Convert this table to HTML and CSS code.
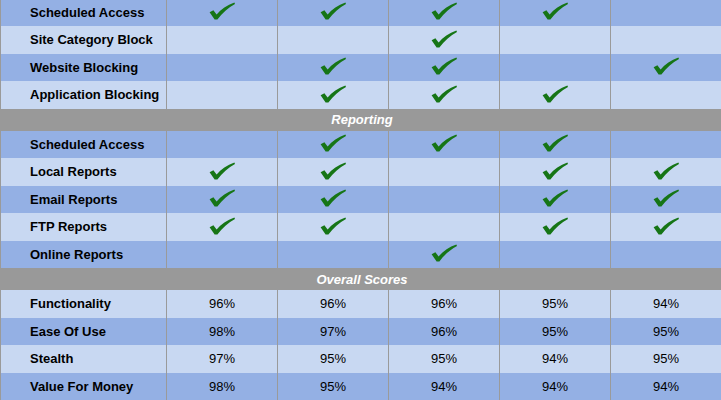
FILE: index.html
```html
<!DOCTYPE html>
<html>
<head>
<meta charset="utf-8">
<link rel="stylesheet" href="styles.css">
</head>
<body>
<svg class="defs" width="0" height="0" aria-hidden="true">
  <symbol id="chk" viewBox="0 0 26 18">
    <path d="M0.6,10.2 L4.4,8.2 L7.6,12.4 C12,7.4 18,2.8 25.4,0.4 L26,2 C19.4,5.6 13,11 8.4,17.6 L5.6,17.6 Z"/>
  </symbol>
</svg>
<div class="sheet">
  <div class="row dark"><div class="cell label">Scheduled Access</div><div class="cell"><svg class="ck"><use href="#chk"/></svg></div><div class="cell"><svg class="ck"><use href="#chk"/></svg></div><div class="cell"><svg class="ck"><use href="#chk"/></svg></div><div class="cell"><svg class="ck"><use href="#chk"/></svg></div><div class="cell"></div></div>
  <div class="row light"><div class="cell label">Site Category Block</div><div class="cell"></div><div class="cell"></div><div class="cell"><svg class="ck"><use href="#chk"/></svg></div><div class="cell"></div><div class="cell"></div></div>
  <div class="row dark"><div class="cell label">Website Blocking</div><div class="cell"></div><div class="cell"><svg class="ck"><use href="#chk"/></svg></div><div class="cell"><svg class="ck"><use href="#chk"/></svg></div><div class="cell"></div><div class="cell"><svg class="ck"><use href="#chk"/></svg></div></div>
  <div class="row light"><div class="cell label">Application Blocking</div><div class="cell"></div><div class="cell"><svg class="ck"><use href="#chk"/></svg></div><div class="cell"><svg class="ck"><use href="#chk"/></svg></div><div class="cell"><svg class="ck"><use href="#chk"/></svg></div><div class="cell"></div></div>
  <div class="section">Reporting</div>
  <div class="row dark"><div class="cell label">Scheduled Access</div><div class="cell"></div><div class="cell"><svg class="ck"><use href="#chk"/></svg></div><div class="cell"><svg class="ck"><use href="#chk"/></svg></div><div class="cell"><svg class="ck"><use href="#chk"/></svg></div><div class="cell"></div></div>
  <div class="row light"><div class="cell label">Local Reports</div><div class="cell"><svg class="ck"><use href="#chk"/></svg></div><div class="cell"><svg class="ck"><use href="#chk"/></svg></div><div class="cell"></div><div class="cell"><svg class="ck"><use href="#chk"/></svg></div><div class="cell"><svg class="ck"><use href="#chk"/></svg></div></div>
  <div class="row dark"><div class="cell label">Email Reports</div><div class="cell"><svg class="ck"><use href="#chk"/></svg></div><div class="cell"><svg class="ck"><use href="#chk"/></svg></div><div class="cell"></div><div class="cell"><svg class="ck"><use href="#chk"/></svg></div><div class="cell"><svg class="ck"><use href="#chk"/></svg></div></div>
  <div class="row light"><div class="cell label">FTP Reports</div><div class="cell"><svg class="ck"><use href="#chk"/></svg></div><div class="cell"><svg class="ck"><use href="#chk"/></svg></div><div class="cell"></div><div class="cell"><svg class="ck"><use href="#chk"/></svg></div><div class="cell"><svg class="ck"><use href="#chk"/></svg></div></div>
  <div class="row dark"><div class="cell label">Online Reports</div><div class="cell"></div><div class="cell"></div><div class="cell"><svg class="ck"><use href="#chk"/></svg></div><div class="cell"></div><div class="cell"></div></div>
  <div class="section">Overall Scores</div>
  <div class="row light"><div class="cell label">Functionality</div><div class="cell">96%</div><div class="cell">96%</div><div class="cell">96%</div><div class="cell">95%</div><div class="cell">94%</div></div>
  <div class="row dark"><div class="cell label">Ease Of Use</div><div class="cell">98%</div><div class="cell">97%</div><div class="cell">96%</div><div class="cell">95%</div><div class="cell">95%</div></div>
  <div class="row light"><div class="cell label">Stealth</div><div class="cell">97%</div><div class="cell">95%</div><div class="cell">95%</div><div class="cell">94%</div><div class="cell">95%</div></div>
  <div class="row dark"><div class="cell label">Value For Money</div><div class="cell">98%</div><div class="cell">95%</div><div class="cell">94%</div><div class="cell">94%</div><div class="cell">94%</div></div>
</div>
</body>
</html>
```

FILE: styles.css
```css
html, body {
  margin: 0;
  padding: 0;
  background: #ffffff;
  overflow: hidden;
}
.defs {
  position: absolute;
  width: 0;
  height: 0;
}
.sheet {
  margin-top: -1.5px;
  width: 721px;
  font-family: "Liberation Sans", Arial, sans-serif;
  font-size: 13px;
  color: #000000;
}
.row {
  display: grid;
  grid-template-columns: 166px repeat(5, 111px);
  height: 27.5px;
}
.row.dark { background: #94b0e4; }
.row.light { background: #c8d8f2; }
.cell {
  box-sizing: border-box;
  border-left: 1px solid #9a9a9a;
  display: flex;
  align-items: center;
  justify-content: center;
}
.cell.label {
  justify-content: flex-start;
  padding-left: 29px;
  font-weight: bold;
  white-space: nowrap;
}
.ck {
  width: 26px;
  height: 18px;
  fill: #167516;
  margin-top: -2px;
}
.section {
  height: 22px;
  background: #999999;
  color: #ffffff;
  font-weight: bold;
  font-style: italic;
  display: flex;
  align-items: center;
  justify-content: center;
  padding-left: 3px;
}
```
